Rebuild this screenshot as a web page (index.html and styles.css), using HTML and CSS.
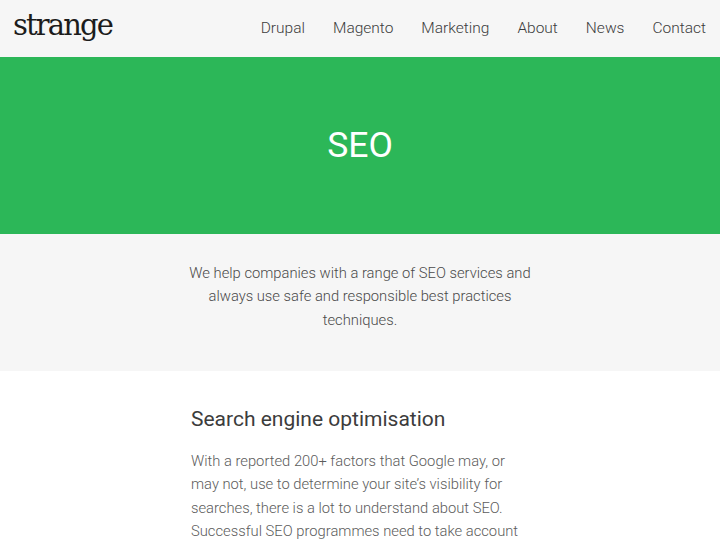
FILE: index.html
```html
<!DOCTYPE html>
<html lang="en">
<head>
<meta charset="utf-8">
<title>SEO</title>
<link rel="stylesheet" href="styles.css">
</head>
<body>
<header class="site-header">
  <a class="logo" href="#">strange</a>
  <nav class="nav">
    <a href="#">Drupal</a>
    <a href="#">Magento</a>
    <a href="#">Marketing</a>
    <a href="#">About</a>
    <a href="#">News</a>
    <a href="#">Contact</a>
  </nav>
</header>
<section class="hero"><h1>SEO</h1></section>
<section class="intro">
  <p>We help companies with a range of SEO services and always use safe and responsible best practices techniques.</p>
</section>
<main class="content">
  <h2>Search engine optimisation</h2>
  <p>With a reported 200+ factors that Google may, or may not, use to determine your site’s visibility for searches, there is a lot to understand about SEO. Successful SEO programmes need to take account</p>
</main>
</body>
</html>
```
FILE: styles.css
```css
html, body { margin: 0; padding: 0; height: 540px; overflow: hidden; }
body { font-family: Roboto, sans-serif; font-weight: 300; background: #fff; color: #555; }
a { color: inherit; text-decoration: none; }
.site-header { height: 57px; background: #f6f6f6; display: flex; align-items: center; justify-content: space-between; padding: 0 14px 0 13px; }
.logo { font-family: "DejaVu Serif", serif; font-size: 29px; letter-spacing: -1.85px; color: #1c1c1c; line-height: 50px; height: 57px; }
.nav { display: flex; gap: 28px; font-size: 15.5px; color: #3c3c3c; padding-bottom: 2px; }
.hero { height: 177px; background: #2cb758; display: flex; align-items: center; justify-content: center; }
.hero h1 { margin: 0; color: #fff; font-size: 35.5px; font-weight: 400; line-height: 1; }
.intro { height: 137px; background: #f6f6f6; box-sizing: border-box; padding-top: 28px; }
.intro p { margin: 0 auto; width: 350px; text-align: center; font-size: 14.75px; line-height: 23.3px; color: #4a4a4a; }
.content { width: 338px; margin: 0 auto; padding-top: 35px; }
.content h2 { margin: 0 0 18px; font-size: 21px; font-weight: 400; line-height: 26px; color: #3c3c3c; }
.content p { margin: 0; font-size: 14.75px; line-height: 23.3px; color: #5c5c5c; }
```
